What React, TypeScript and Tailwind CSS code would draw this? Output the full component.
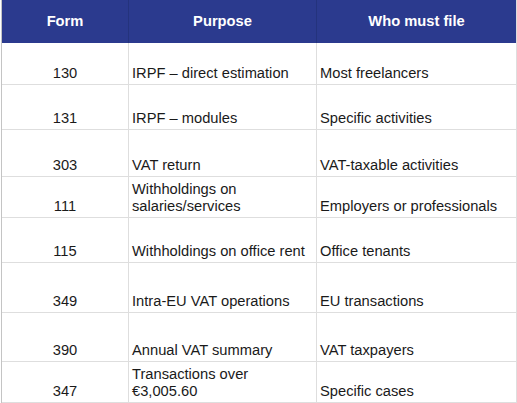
const rows: { form: string; purpose: string; who: string; h: string }[] = [
  { form: "130", purpose: "IRPF – direct estimation", who: "Most freelancers", h: "h-[42px]" },
  { form: "131", purpose: "IRPF – modules", who: "Specific activities", h: "h-[45px]" },
  { form: "303", purpose: "VAT return", who: "VAT-taxable activities", h: "h-[47px]" },
  { form: "111", purpose: "Withholdings on salaries/services", who: "Employers or professionals", h: "h-[41px]" },
  { form: "115", purpose: "Withholdings on office rent", who: "Office tenants", h: "h-[45px]" },
  { form: "349", purpose: "Intra-EU VAT operations", who: "EU transactions", h: "h-[50px]" },
  { form: "390", purpose: "Annual VAT summary", who: "VAT taxpayers", h: "h-[49px]" },
  { form: "347", purpose: "Transactions over €3,005.60", who: "Specific cases", h: "h-[41px]" },
];

export default function App() {
  return (
    <div className="h-[403px] w-[517px] overflow-hidden bg-white font-['Liberation_Sans',Arial,sans-serif] text-[14.7px] leading-[17px] text-[#1a1a1a]">
      <div className="ml-px border-l border-[#c4c4c4]">
        {/* header */}
        <div className="grid h-[43px] grid-cols-[127px_188px_200px] bg-[#2b3a8e] font-bold text-white">
          <div className="flex items-center justify-center border-r border-[#24337d]">Form</div>
          <div className="flex items-center justify-center border-r border-[#24337d]">Purpose</div>
          <div className="flex items-center justify-center border-r border-[#dcdcdc]">Who must file</div>
        </div>

        {rows.map((r) => (
          <div
            key={r.form}
            className={`grid grid-cols-[127px_188px_200px] border-b border-[#dedede] ${r.h}`}
          >
            <div className="flex items-end justify-center border-r border-[#dedede] pb-[2px]">
              {r.form}
            </div>
            <div className="flex items-end border-r border-[#dedede] px-[3px] pb-[2px]">
              <span>{r.purpose}</span>
            </div>
            <div className="flex items-end border-r border-[#dedede] px-[3px] pb-[2px]">
              <span>{r.who}</span>
            </div>
          </div>
        ))}
      </div>
    </div>
  );
}
